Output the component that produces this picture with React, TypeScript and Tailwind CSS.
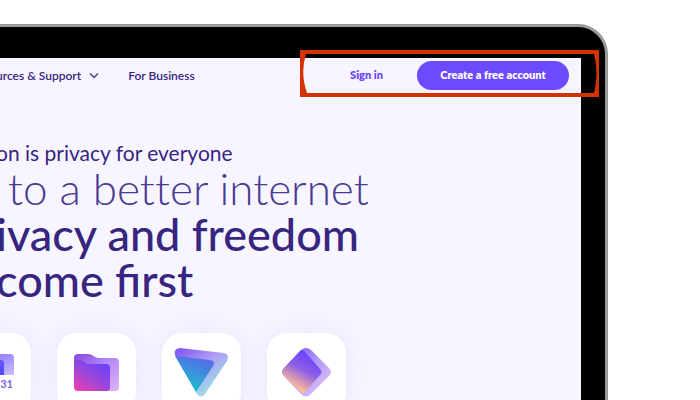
import type { ReactNode } from "react";

function Chevron() {
  return (
    <svg width="10" height="6" viewBox="0 0 10 6" fill="none" aria-hidden="true">
      <path d="M1 .5l4 4 4-4" stroke="#4a3a92" strokeWidth="1.4" />
    </svg>
  );
}

function CalendarIcon() {
  return (
    <svg className="absolute inset-0" width="79" height="79" viewBox="0 0 79 79" aria-hidden="true">
      <defs>
        <linearGradient id="cal" x1="0" y1="0" x2="1" y2="1">
          <stop offset="0" stopColor="#7a5cff" />
          <stop offset="1" stopColor="#c9c0fc" />
        </linearGradient>
        <linearGradient id="calFront" x1="0" y1="0" x2="1" y2="1">
          <stop offset="0" stopColor="#8d5cf0" />
          <stop offset="1" stopColor="#4a48f8" />
        </linearGradient>
      </defs>
      <path d="M18 21h40q4 0 4 4v17H18z" fill="url(#cal)" />
      <path d="M18 27h31q3 0 3 4v11H18z" fill="url(#calFront)" />
    </svg>
  );
}

function FolderIcon() {
  return (
    <svg className="absolute inset-0" width="79" height="79" viewBox="0 0 79 79" aria-hidden="true">
      <defs>
        <linearGradient id="folderBack" x1="0" y1="0" x2="1" y2="1">
          <stop offset="0" stopColor="#8448e0" />
          <stop offset=".5" stopColor="#b58cf6" />
          <stop offset="1" stopColor="#e0b5f8" />
        </linearGradient>
        <linearGradient id="folderFront" x1=".85" y1="0" x2=".1" y2="1">
          <stop offset="0" stopColor="#6541ff" />
          <stop offset=".5" stopColor="#9746dc" />
          <stop offset="1" stopColor="#ee3fae" />
        </linearGradient>
      </defs>
      <path d="M17 25q0-4 4-4h10q2 0 4 1l3 2q2 1 4 1h16q4 0 4 4v25q0 4-4 4H21z" fill="url(#folderBack)" />
      <path d="M17 27h5q2 0 4 1l3 2q1 1 4 1h16q4 0 4 4v19q0 4-3 4H21q-4 0-4-4z" fill="url(#folderFront)" />
    </svg>
  );
}

function ShieldIcon() {
  return (
    <svg className="absolute inset-0" width="79" height="79" viewBox="0 0 79 79" aria-hidden="true">
      <defs>
        <linearGradient id="vpnBack" x1="0" y1="0" x2=".8" y2="1">
          <stop offset="0" stopColor="#7c4ff2" />
          <stop offset=".45" stopColor="#b09cf5" />
          <stop offset="1" stopColor="#95f0e4" />
        </linearGradient>
        <linearGradient id="vpnFront" x1=".8" y1="0" x2=".4" y2="1">
          <stop offset="0" stopColor="#5a65ed" />
          <stop offset=".5" stopColor="#3b91dc" />
          <stop offset="1" stopColor="#17c5ca" />
        </linearGradient>
      </defs>
      <path d="M18 15l44 5q6 1 3 8L43 61q-4 5-8 0L13 22q-2-6 5-7z" fill="url(#vpnBack)" />
      <path d="M13 23l35 4q6 1 3 6L34 59z" fill="url(#vpnFront)" />
    </svg>
  );
}

function DiamondIcon() {
  return (
    <svg className="absolute inset-0" width="79" height="79" viewBox="0 0 79 79" aria-hidden="true">
      <defs>
        <linearGradient id="passBack" x1="0" y1="0" x2="1" y2="1">
          <stop offset="0" stopColor="#6f48f5" />
          <stop offset=".5" stopColor="#b198fa" />
          <stop offset="1" stopColor="#ead4f6" />
        </linearGradient>
        <linearGradient id="passFront" x1=".75" y1=".1" x2=".3" y2="1">
          <stop offset="0" stopColor="#6542ff" />
          <stop offset=".4" stopColor="#8d5de5" />
          <stop offset=".85" stopColor="#ffbd96" />
        </linearGradient>
      </defs>
      <path d="M34 17q5-4 10 0l18 18q4 4 0 8L44 61q-5 5-10 0L17 43q-4-4 0-8z" fill="url(#passBack)" />
      <path d="M34 17l3 1 16 18q3 3 0 6L36 61 17 43q-4-4 0-8z" fill="url(#passFront)" />
    </svg>
  );
}

function Tile({ children }: { children: ReactNode }) {
  return (
    <li className="relative size-[79px] shrink-0 rounded-[20px] bg-white shadow-[0_0_24px_rgba(109,74,255,0.10)]">
      {children}
    </li>
  );
}

function Highlight() {
  return (
    <svg
      className="pointer-events-none absolute top-[23px] right-[6px]"
      width="299"
      height="47"
      viewBox="0 0 299 47"
      aria-hidden="true"
    >
      <path
        fillRule="evenodd"
        fill="#d43200"
        d="M0 0H299V47H0ZM6 4Q0 23 7 43H294Q299 23 294 4Z"
      />
    </svg>
  );
}

export default function App() {
  return (
    <div className="h-screen overflow-hidden bg-white pt-6 font-['Lato',sans-serif] text-[#372580] antialiased">
      <div className="relative mr-[92px] h-full rounded-tr-[30px] border-t-3 border-r-3 border-[#999] bg-black pt-[31px] pr-6">
        <div className="h-full overflow-hidden bg-[#f7f5ff]">
          <header className="flex items-center justify-between pt-[3px] pr-3">
            <nav className="-ml-1 flex items-center gap-[29px] text-[12px] leading-[29px] font-semibold">
              <button type="button" className="flex items-center gap-2 whitespace-nowrap">
                urces &amp; Support
                <Chevron />
              </button>
              <a href="#business" className="whitespace-nowrap">For Business</a>
            </nav>
            <div className="flex items-center gap-[34px] text-[11px] font-extrabold">
              <a href="#signin" className="text-[#6d4aff]">Sign in</a>
              <button type="button" className="h-[29px] w-[152px] rounded-full bg-[#6d4aff] whitespace-nowrap text-white">
                Create a free account
              </button>
            </div>
          </header>
          <main className="-ml-1 pt-[50px] whitespace-nowrap">
            <p className="text-[21px] leading-[25px]">on is privacy for everyone</p>
            <h1 className="text-[45px] leading-[46px]">
              <span className="block pl-3 font-light text-[#4a3a92] text-[44px] [font-variant-ligatures:none]">to a better internet</span>
              <span className="block font-medium">ivacy and freedom</span>
              <span className="block font-medium">come first</span>
            </h1>
            <ul className="-ml-11 flex gap-[26px] pt-[30px]">
              <Tile>
                <CalendarIcon />
                <span className="absolute right-[18px] bottom-[21px] text-[11px] leading-[14px] font-bold text-[#7f62e8]">31</span>
              </Tile>
              <Tile><FolderIcon /></Tile>
              <Tile><ShieldIcon /></Tile>
              <Tile><DiamondIcon /></Tile>
            </ul>
          </main>
        </div>
        <Highlight />
      </div>
    </div>
  );
}
